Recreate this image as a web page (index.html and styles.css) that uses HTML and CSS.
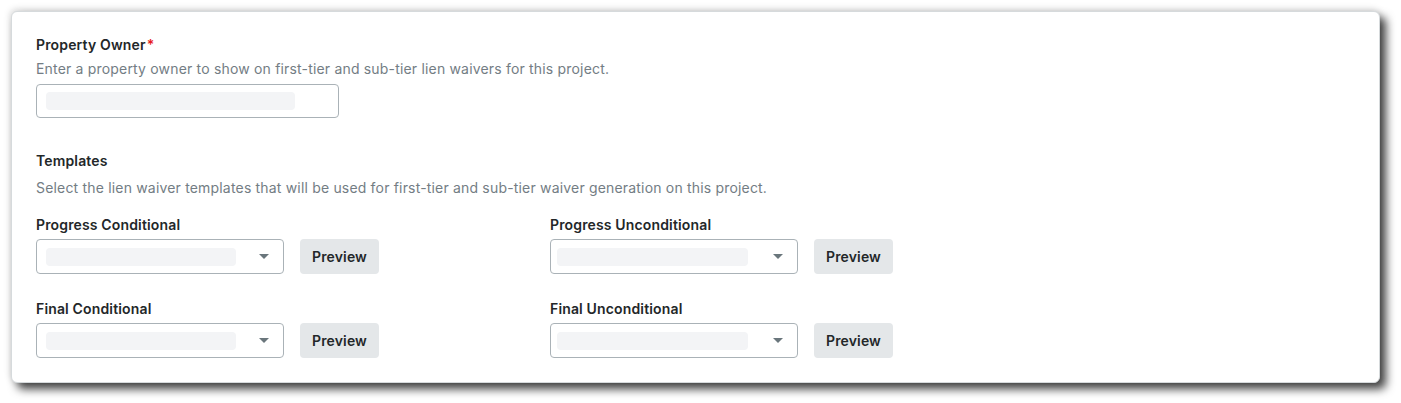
FILE: index.html
```html
<!DOCTYPE html>
<html lang="en">
<head>
<meta charset="utf-8">
<title>Lien Waiver Settings</title>
<link rel="stylesheet" href="styles.css">
</head>
<body>
<div class="card">
  <section class="section owner">
    <div class="label">Property Owner<span class="req">*</span></div>
    <div class="desc">Enter a property owner to show on first-tier and sub-tier lien waivers for this project.</div>
    <div class="input"><span class="skeleton skeleton-wide"></span></div>
  </section>
  <section class="section templates">
    <div class="label">Templates</div>
    <div class="desc desc-templates">Select the lien waiver templates that will be used for first-tier and sub-tier waiver generation on this project.</div>
    <div class="grid">
      <div class="field">
        <div class="label">Progress Conditional</div>
        <div class="row">
          <div class="select"><span class="skeleton"></span><span class="caret"></span></div>
          <button class="btn">Preview</button>
        </div>
      </div>
      <div class="field field-right">
        <div class="label">Progress Unconditional</div>
        <div class="row">
          <div class="select"><span class="skeleton"></span><span class="caret"></span></div>
          <button class="btn">Preview</button>
        </div>
      </div>
      <div class="field">
        <div class="label">Final Conditional</div>
        <div class="row">
          <div class="select"><span class="skeleton"></span><span class="caret"></span></div>
          <button class="btn">Preview</button>
        </div>
      </div>
      <div class="field field-right">
        <div class="label">Final Unconditional</div>
        <div class="row">
          <div class="select"><span class="skeleton"></span><span class="caret"></span></div>
          <button class="btn">Preview</button>
        </div>
      </div>
    </div>
  </section>
</div>
</body>
</html>
```

FILE: styles.css
```css
html, body {
  margin: 0;
  padding: 0;
  background: #ffffff;
}
body {
  font-family: "Inter", "Noto Sans", "Liberation Sans", sans-serif;
  font-size: 14px;
  color: #232729;
  padding: 11px 21px 20px 11px;
}
.card {
  box-sizing: border-box;
  width: 1369px;
  height: 372px;
  background: #ffffff;
  border: 1px solid #d6dadc;
  border-radius: 6px;
  padding: 23px 24px 24px 24px;
  box-shadow: 6px 6px 10px rgba(0, 0, 0, 0.75), -1px -2px 7px rgba(0, 0, 0, 0.14);
}
.label {
  font-weight: 600;
  line-height: 20px;
  letter-spacing: 0.15px;
  color: #232729;
}
.req {
  color: #e61920;
  font-weight: 600;
  margin-left: 1px;
}
.desc {
  margin-top: 4px;
  line-height: 20px;
  letter-spacing: 0.18px;
  color: #737d84;
}
.input {
  box-sizing: border-box;
  margin-top: 5px;
  width: 303px;
  height: 34px;
  border: 1px solid #aab2b7;
  border-radius: 4px;
  display: flex;
  align-items: center;
  padding-left: 9px;
}
.skeleton {
  display: block;
  width: 190px;
  height: 18px;
  border-radius: 4px;
  background: #f3f4f6;
}
.skeleton-wide {
  width: 249px;
}
.templates {
  margin-top: 33px;
}
.desc-templates {
  margin-top: 7px;
}
.grid {
  margin-top: 17px;
  display: grid;
  grid-template-columns: 514px 514px;
  row-gap: 25px;
}
.row {
  margin-top: 4px;
  display: flex;
  gap: 16px;
}
.select {
  box-sizing: border-box;
  width: 248px;
  height: 35px;
  border: 1px solid #aab2b7;
  border-radius: 4px;
  display: flex;
  align-items: center;
  justify-content: space-between;
  padding: 0 14px 0 9px;
}
.field-right .select {
  padding-left: 6px;
}
.field-right .skeleton {
  width: 191px;
}
.caret {
  width: 0;
  height: 0;
  border-left: 5px solid transparent;
  border-right: 5px solid transparent;
  border-top: 5px solid #6a767c;
}
.btn {
  box-sizing: border-box;
  width: 79px;
  height: 35px;
  border: none;
  border-radius: 4px;
  background: #e4e7e9;
  font-family: inherit;
  font-size: 14px;
  font-weight: 600;
  letter-spacing: 0.15px;
  color: #232729;
  padding: 0;
  cursor: pointer;
}
```
